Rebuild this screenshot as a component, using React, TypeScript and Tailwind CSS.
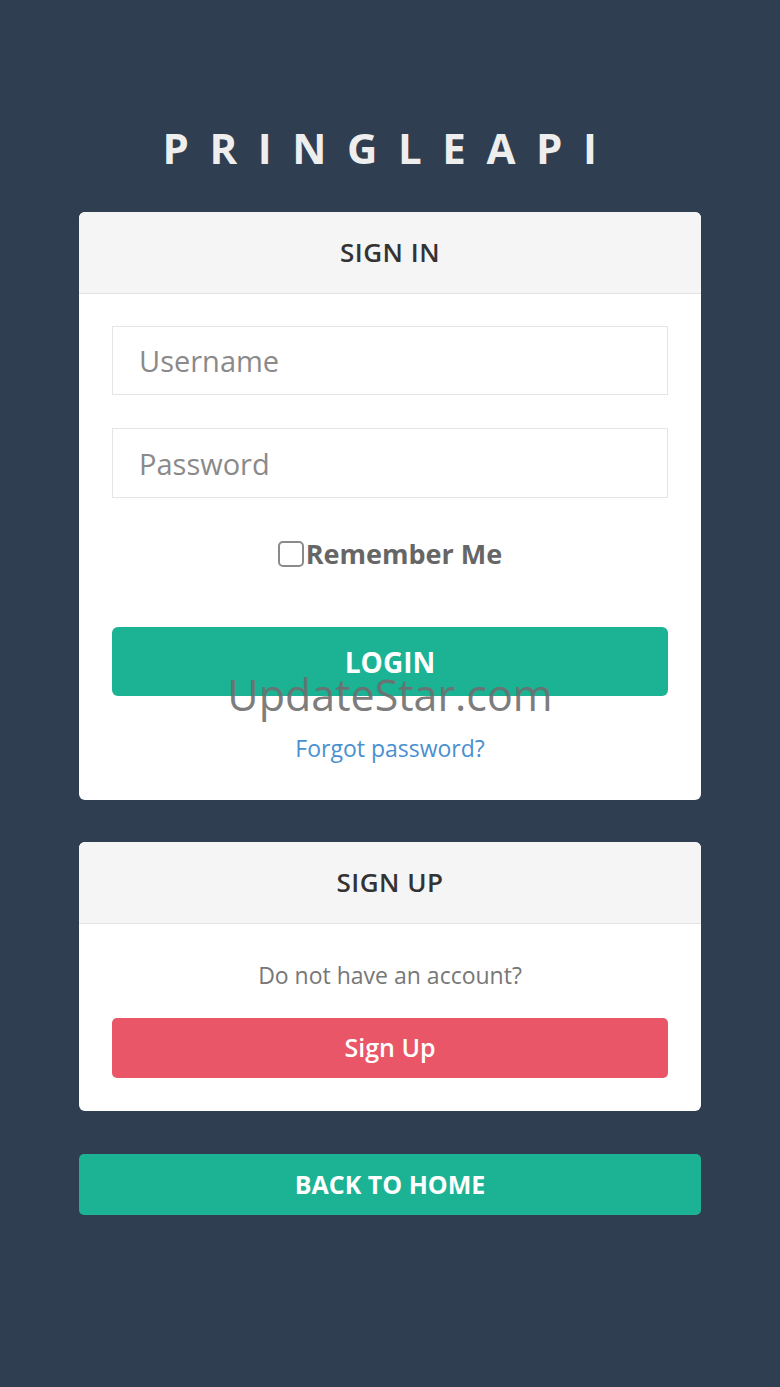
import React from "react";

export default function App() {
  return (
    <div
      className="relative min-h-[1387px] w-full bg-[#2f3e50] flex flex-col items-center pt-[124px]"
      style={{ fontFamily: '"Open Sans", "Liberation Sans", sans-serif' }}
    >
      <h1 className="text-[42px] leading-[48px] font-bold text-[#eeeeee] tracking-[0.49em] mb-[40px]">
        PRINGLEAPI
      </h1>

      <div className="w-[622px] bg-white rounded-[6px] overflow-hidden">
        <div className="h-[82px] bg-[#f5f5f5] border-b border-[#e3e3e3] flex items-center justify-center">
          <span className="text-[26px] font-semibold text-[#333333] tracking-[0.02em]">SIGN IN</span>
        </div>
        <div className="px-[33px] pt-[32px] pb-[37px] flex flex-col">
          <input
            placeholder="Username"
            className="h-[69px] w-full border border-[#e5e5e5] px-[26px] text-[29px] text-[#555] placeholder:text-[#8a8a8a] outline-none"
          />
          <input
            type="password"
            placeholder="Password"
            className="mt-[33px] h-[70px] w-full border border-[#e5e5e5] px-[26px] text-[29px] text-[#555] placeholder:text-[#8a8a8a] outline-none"
          />
          <label className="mt-[42px] flex items-center justify-center">
            <span className="w-[26px] h-[26px] border-2 border-[#8a8a8a] rounded-[5px] bg-white" />
            <span className="text-[27px] font-bold text-[#666666] leading-none ml-[2px]">Remember Me</span>
          </label>
          <button className="mt-[60px] h-[69px] w-full rounded-[6px] bg-[#1bb394] text-white text-[28px] font-bold">
            LOGIN
          </button>
          <a className="mt-[37px] text-center text-[23px] text-[#4a90d0] leading-[30px]">Forgot password?</a>
        </div>
      </div>

      <div className="mt-[42px] w-[622px] bg-white rounded-[6px] overflow-hidden">
        <div className="h-[82px] bg-[#f5f5f5] border-b border-[#e3e3e3] flex items-center justify-center">
          <span className="text-[26px] font-semibold text-[#333333] tracking-[0.02em]">SIGN UP</span>
        </div>
        <div className="px-[33px] pt-[36px] pb-[33px] flex flex-col">
          <p className="text-center text-[23px] text-[#777777] leading-[30px]">Do not have an account?</p>
          <button className="mt-[28px] h-[60px] w-full rounded-[5px] bg-[#e95668] text-white text-[25px] font-semibold">
            Sign Up
          </button>
        </div>
      </div>

      <button className="mt-[43px] w-[622px] h-[61px] rounded-[5px] bg-[#1bb394] text-white text-[25px] font-bold">
        BACK TO HOME
      </button>

      <div className="absolute left-0 right-0 top-[667px] flex justify-center pointer-events-none">
        <span className="text-[43px] text-[#6f6f6f] opacity-90 leading-[56px]">UpdateStar.com</span>
      </div>
    </div>
  );
}
